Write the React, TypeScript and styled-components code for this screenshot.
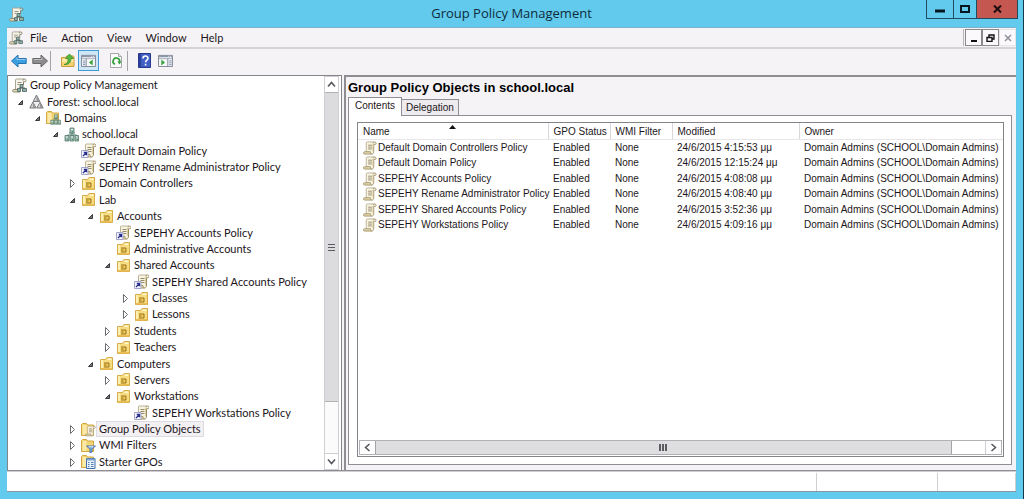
import React from "react";
import styled, { createGlobalStyle, css } from "styled-components";

const TITLE_FONT = '"Open Sans", "Noto Sans", sans-serif';
const UI_FONT = 'Lato, "Open Sans", sans-serif';
const CLASSIC_FONT = '"Liberation Sans", Arial, sans-serif';

const GlobalStyle = createGlobalStyle`
  *, *::before, *::after { box-sizing: border-box; }
  html, body { margin: 0; height: 100%; }
  body { background: #62caed; color: #1c1620; font: 11px/16px ${UI_FONT}; }
  #root { height: 100%; }
  button { font: inherit; color: inherit; padding: 0; margin: 0; border: 0; background: none; }
  svg { display: block; flex: none; }
`;

/* ---------- window frame ---------- */

const Window = styled.div`
  display: flex;
  flex-direction: column;
  min-height: 100%;
  padding: 0 7px 7px;
  background: #62caed;
  border-right: 1px solid #16394a;
`;

const TitleBar = styled.header`
  display: grid;
  grid-template-columns: 1fr auto 1fr;
  height: 27px;
`;

const TitleIcon = styled.span`
  padding: 7px 0 0 2px;
`;

const Title = styled.h1`
  margin: 0;
  font-family: ${TITLE_FONT};
  font-size: 13px;
  font-weight: 400;
  line-height: 27px;
  color: #0d2c3b;
`;

const Caption = styled.div`
  display: flex;
  justify-self: end;
  height: 19px;
  border: 1px solid #1f4c60;
  border-top: 0;
  margin-right: -2px;
`;

const CaptionButton = styled.button<{ $width: number; $close?: boolean }>`
  display: grid;
  place-items: center;
  width: ${(p) => p.$width}px;
  height: 18px;
  background: ${(p) => (p.$close ? "#c45850" : "transparent")};
  & + & { border-left: 1px solid #1f4c60; }
`;

const Client = styled.main`
  flex: 1;
  display: flex;
  flex-direction: column;
  background: #f6f3f7;
  border-top: 1px solid #7db3ca;
  border-bottom: 1px solid #8797a3;
`;

/* ---------- menu and toolbar ---------- */

const MenuBar = styled.nav`
  display: flex;
  align-items: center;
  height: 21px;
  padding-left: 2px;
  border-bottom: 2px solid #d6d2d6;
`;

const MenuItem = styled.button`
  padding: 0 7px;
`;

const ChildButtons = styled.div`
  display: flex;
  margin-left: auto;
  padding-left: 1px;
  border-left: 1px solid #b9b5b9;
`;

const ChildButton = styled.button<{ $muted?: boolean }>`
  display: grid;
  place-items: center;
  width: 17px;
  height: 17px;
  border: 1px solid ${(p) => (p.$muted ? "#e8e5e9" : "#8c898e")};
  background: #fbf9fc;
`;

const ToolBar = styled.div`
  display: flex;
  align-items: center;
  height: 26px;
  padding: 0 0 3px 1px;
`;

const ToolButton = styled.button<{ $pressed?: boolean }>`
  display: grid;
  place-items: center;
  width: 21px;
  height: 21px;
  ${(p) =>
    p.$pressed &&
    css`
      background: #cfe6f7;
      border: 1px solid #3e9bd6;
    `}
`;

const ToolGap = styled.span<{ $line?: boolean }>`
  width: 7px;
  height: 20px;
  ${(p) => p.$line && "border-left: 1px solid #a5a2a8;"}
`;

/* ---------- panes ---------- */

const Panes = styled.div`
  flex: 1;
  display: flex;
  gap: 2px;
  border-bottom: 1px solid #8f8d92;
`;

const TreePane = styled.section`
  flex: 0 0 335px;
  display: flex;
  background: #fff;
  border: 1px solid #85838a;
  border-bottom: 0;
`;

const Tree = styled.ul`
  flex: 1;
  min-width: 0;
  display: flex;
  flex-direction: column;
  margin: 0;
  padding: 1px 0 0;
  list-style: none;
`;

const TreeRow = styled.li<{ $indent: number }>`
  flex: 1 0 16px;
  display: flex;
  align-items: center;
  padding-left: ${(p) => p.$indent}px;
`;

const Expander = styled.button`
  display: grid;
  place-items: center;
  width: 16px;
  height: 16px;
`;

const TreeLabel = styled.span<{ $selected?: boolean }>`
  padding: 0 3px;
  white-space: nowrap;
  line-height: 16px;
  ${(p) => p.$selected && "background: #f3f0f4; outline: 1px solid #dedbe0; outline-offset: -1px;"}
`;

const VScroll = styled.div`
  display: flex;
  flex-direction: column;
  width: 15px;
  margin-right: 2px;
  border: 1px solid #d0ced2;
  background: #fcfbfc;
`;

const VThumb = styled.div`
  flex: 0 0 79%;
  display: grid;
  place-items: center;
  background: #dcdbdd;
  border: solid #b3b1b5;
  border-width: 1px 0;
`;

const VTrack = styled.div`
  flex: 1;
  border-bottom: 1px solid #d0ced2;
`;

const ScrollButton = styled.button`
  display: grid;
  place-items: center;
  flex: 0 0 15px;
  background: #fff;
`;

const DetailPane = styled.section`
  flex: 1;
  min-width: 0;
  display: flex;
  flex-direction: column;
  padding: 2px 4px 5px 2px;
  border-top: 2px solid #8f8d92;
  border-left: 2px solid #8f8d92;
  font-family: ${CLASSIC_FONT};
  font-size: 10px;
`;

const Heading = styled.h2`
  margin: 0;
  font-size: 13px;
  line-height: 18px;
  color: #000;
`;

const Tabs = styled.div`
  display: flex;
  align-items: flex-end;
`;

const Tab = styled.button<{ $active?: boolean }>`
  position: relative;
  height: ${(p) => (p.$active ? 19 : 16)}px;
  padding: ${(p) => (p.$active ? "0 6px 2px" : "0 4px")};
  margin-bottom: ${(p) => (p.$active ? -1 : 0)}px;
  border: 1px solid #908e94;
  border-bottom: 0;
  line-height: 14px;
  background: ${(p) => (p.$active ? "#fff" : "#eeebef")};
  & + & { border-left: 0; }
`;

const TabPanel = styled.div`
  flex: 1;
  display: flex;
  padding: 6px 7px 7px 8px;
  background: #fff;
  border: 1px solid #908e94;
`;

const ListBox = styled.div`
  flex: 1;
  min-width: 0;
  display: flex;
  flex-direction: column;
  border: 1px solid #85838a;
`;

const ListArea = styled.div`
  flex: 1;
  overflow: hidden;
`;

const PolicyTable = styled.table`
  width: 100%;
  height: 110px;
  border-collapse: collapse;
  table-layout: fixed;
  line-height: 14px;
  white-space: nowrap;
`;

const Column = styled.col<{ $width?: number }>`
  width: ${(p) => (p.$width ? `${p.$width}px` : "auto")};
`;

const HeaderCell = styled.th`
  position: relative;
  height: 16px;
  padding: 2px 0 0 5px;
  font-weight: 400;
  text-align: left;
  border-bottom: 1px solid #e8e6e9;
  & + & { border-left: 1px solid #d9d7da; }
`;

const SortMark = styled.span`
  position: absolute;
  top: 2px;
  left: calc(50% - 4px);
`;

const Cell = styled.td`
  padding: 0 0 0 5px;
`;

const NameCell = styled.span`
  display: flex;
  align-items: center;
  gap: 1px;
`;

const HScroll = styled.div`
  display: flex;
  height: 15px;
  margin: 0 1px 1px;
  border: 1px solid #b3b1b5;
  background: #fff;
`;

const HThumb = styled.div`
  flex: 0 0 90%;
  display: grid;
  place-items: center;
  background: #dedddf;
  border: solid #a5a3a8;
  border-width: 0 1px;
`;

const HTrack = styled.div`
  flex: 1;
  border-right: 1px solid #d0ced2;
`;

const StatusBar = styled.footer`
  display: flex;
  height: 20px;
  background: #fff;
  border-top: 1px solid #d0ced2;
`;

const StatusCell = styled.span<{ $width?: number }>`
  flex: ${(p) => (p.$width ? `0 0 ${p.$width}px` : "1")};
  margin-top: 1px;
  border-right: 1px solid #d0ced2;
`;

/* ---------- icons ---------- */

type IconName =
  | "console" | "forest" | "domains" | "domain" | "link" | "ou" | "gpos" | "wmi" | "starter" | "scroll";

const Scroll = () => (
  <>
    <path d="M3.500 1h9v2.500h-1V12l-1.500 2H3.500z" fill="#f8f4e2" />
    <path d="M3.500 11V2c0-.6.400-1 1-1H12" fill="none" stroke="#bdb294" />
    <path d="M11 2.500c0-2 3-2 3 0 0 .8-.6 1.200-1.200 1.200h-1.300V11c0 1.800-.8 3-2 3" fill="none" stroke="#9c8c60" />
    <path d="M10.500 3v8" stroke="#dccf9f" />
    <path d="M9.500 14H1.800c-1.700 0-1.700-2.500 0-2.500H8c0 1.500.5 2.500 1.500 2.500z" fill="#e4d9b2" stroke="#a39468" />
    <path d="M5.500 4.500h4M5.500 6.500h4M5.500 8.500h4" stroke="#95896a" />
  </>
);

const Folder = () => (
  <>
    <path d="M.5 13.500v-11l1-1h4l1 1.500h6v10.500z" fill="#f3d473" stroke="#d2a63f" />
    <path d="M1.500 3h4v10h-4z" fill="#fbe9a8" />
  </>
);

const Servers = () => (
  <>
    <path d="M5 6h6M8 5v3M3.500 12V8h9v4" fill="none" stroke="#517a70" />
    <path d="M6 1h4v5H6zM1 8.500h4V14H1zM6 8.500h4V14H6zM11 8.500h3.500V14H11z" fill="#9ab8ad" stroke="#56786f" strokeWidth=".8" />
    <path d="M7 2.500h2M2 10h2M7 10h2M12 10h1.500" stroke="#e6f4e9" />
    <path d="M3 12.500h1M8 12.500h1M13 12.500h1M8 4.500h1" stroke="#3e9a50" />
  </>
);

function Icon({ name, size = 15 }: { name: IconName; size?: number }) {
  return (
    <svg width={size} height={size} viewBox="0 0 15 15" aria-hidden="true">
      {name === "scroll" && <Scroll />}
      {name === "console" && (
        <>
          <path d="M3.500 1h9v2.500h-1V12l-1.500 2H3.500z" fill="#f6f4ea" />
          <path d="M3.500 11V2c0-.6.400-1 1-1H12" fill="none" stroke="#a9a594" />
          <path d="M11 2.500c0-2 3-2 3 0 0 .8-.6 1.200-1.200 1.200h-1.300V7" fill="none" stroke="#85826f" />
          <path d="M8 14H1.800c-1.700 0-1.700-2.500 0-2.500H6z" fill="#e6dfc2" stroke="#8f8868" />
          <path d="M5.500 4.500h4M5.500 6.500h2" stroke="#9a937a" />
          <path d="M8 6.500h3v3H8zM5.500 10.500h3v3h-3zM10.500 10.500h4v3h-4z" fill="#8fb0a6" stroke="#4d635f" strokeWidth=".8" />
          <path d="M7 10h6" stroke="#4d635f" />
        </>
      )}
      {name === "forest" && (
        <>
          <path d="M7.500 1l3.300 6.500H4.200zM4 8l3.200 6H.8zM11 8l3.200 6H7.800z" fill="#d5d5d6" stroke="#77777a" />
          <path d="M7.500 1v6.500h3.300zM4 8v6h3.200zM11 8v6h3.200z" fill="#98989b" />
          <path d="M4.500 8h6l-3 5z" fill="#f0f0f1" />
        </>
      )}
      {name === "domains" && (
        <>
          <Folder />
          <g transform="translate(4 4) scale(.74)"><Servers /></g>
        </>
      )}
      {name === "domain" && <Servers />}
      {name === "link" && (
        <>
          <g transform="translate(1 0)"><Scroll /></g>
          <path d="M.5 7.500h6.500v7H.5z" fill="#f4f4fb" stroke="#a3a5c8" />
          <path d="M2 13l3-3M2.800 9.500h2.700v2.700" fill="none" stroke="#262f8c" strokeWidth="1.300" />
        </>
      )}
      {name === "ou" && (
        <>
          <path d="M1.500 13.500v-10h5l1.500-2h5.500v12z" fill="#f7dc80" stroke="#d6ab4a" />
          <path d="M8.500 2.500h4v1.500h-4z" fill="#fff6cf" />
          <path d="M2 4h2v9H2z" fill="#fdf0b5" />
          <path d="M2 12h11v1.500H2z" fill="#eabf55" />
          <path d="M5 7h5v4H5" fill="#f3cc58" stroke="#96701f" />
          <path d="M5 9h2.500" stroke="#96701f" />
        </>
      )}
      {name === "gpos" && (
        <>
          <Folder />
          <g transform="translate(4 3.500) scale(.74)"><Scroll /></g>
        </>
      )}
      {name === "wmi" && (
        <>
          <Folder />
          <path d="M5.500 8h9l-3.500 3v3l-2 1v-4z" fill="#7fa9dc" stroke="#3a69a8" strokeWidth=".8" />
          <path d="M7.500 8.800h5" stroke="#dcebfa" />
        </>
      )}
      {name === "starter" && (
        <>
          <Folder />
          <path d="M5.500 4.500h8.500v10h-8.500z" fill="#eaf1fa" stroke="#3f6fae" />
          <path d="M5.500 5.500H14" stroke="#7ba3d4" strokeWidth="2" />
          <path d="M7 8.500h1.500M10 8.500h2.500M7 10.500h1.500M10 10.500h2.500M7 12.500h1.500M10 12.500h2.500" stroke="#4f7fb8" />
        </>
      )}
    </svg>
  );
}

const Chevron = ({ d }: { d: string }) => (
  <svg width="9" height="9" viewBox="0 0 9 9" aria-hidden="true">
    <path d={d} fill="none" stroke="#55535a" strokeWidth="1.500" />
  </svg>
);

const ArrowIcon = ({ fill, stroke, flip }: { fill: string; stroke: string; flip?: boolean }) => (
  <svg width="16" height="14" viewBox="0 0 16 14" aria-hidden="true">
    <path
      d={flip ? "M15.500 7L9 1v3.500H.8v5H9V13z" : "M.5 7L7 1v3.500h8.200v5H7V13z"}
      fill={fill}
      stroke={stroke}
    />
    <path d={flip ? "M1.500 5.500h8.500V3.500" : "M6 3.500v2h8.500"} fill="none" stroke="#fff" strokeOpacity=".45" />
  </svg>
);

const PaneIcon = ({ right }: { right?: boolean }) => (
  <svg width="15" height="13" viewBox="0 0 16 14" aria-hidden="true">
    <path d="M.5 1.500h15v12H.5z" fill="#f7f8fa" stroke="#7b828e" />
    <path d="M1 2.500h14" stroke="#8d97aa" strokeWidth="2" />
    <path d="M11 2.500h1M13 2.500h1" stroke="#f4f6fa" />
    <path d="M1 5h14" stroke="#a4adbc" />
    <path d={right ? "M10.500 5v8" : "M5.500 5v8"} stroke="#7b828e" />
    <path
      d={right ? "M12 7.500h2.500M12 9.500h2.500M12 11.500h2.500" : "M2 7.500h2.500M2 9.500h2.500M2 11.500h2.500"}
      stroke="#6d87ac"
    />
    <path d={right ? "M3.500 6v6.500l4-3.250z" : "M12.500 6v6.500l-4-3.250z"} fill="#39a33b" />
  </svg>
);

/* ---------- data ---------- */

type Node = { label: string; level: number; icon: IconName; state?: "open" | "closed"; selected?: boolean };

const INDENTS = [4, 5, 22, 40, 57, 75, 92, 110];

const NODES: Node[] = [
  { label: "Group Policy Management", level: 0, icon: "console" },
  { label: "Forest: school.local", level: 1, icon: "forest", state: "open" },
  { label: "Domains", level: 2, icon: "domains", state: "open" },
  { label: "school.local", level: 3, icon: "domain", state: "open" },
  { label: "Default Domain Policy", level: 4, icon: "link" },
  { label: "SEPEHY Rename Administrator Policy", level: 4, icon: "link" },
  { label: "Domain Controllers", level: 4, icon: "ou", state: "closed" },
  { label: "Lab", level: 4, icon: "ou", state: "open" },
  { label: "Accounts", level: 5, icon: "ou", state: "open" },
  { label: "SEPEHY Accounts Policy", level: 6, icon: "link" },
  { label: "Administrative Accounts", level: 6, icon: "ou" },
  { label: "Shared Accounts", level: 6, icon: "ou", state: "open" },
  { label: "SEPEHY Shared Accounts Policy", level: 7, icon: "link" },
  { label: "Classes", level: 7, icon: "ou", state: "closed" },
  { label: "Lessons", level: 7, icon: "ou", state: "closed" },
  { label: "Students", level: 6, icon: "ou", state: "closed" },
  { label: "Teachers", level: 6, icon: "ou", state: "closed" },
  { label: "Computers", level: 5, icon: "ou", state: "open" },
  { label: "Servers", level: 6, icon: "ou", state: "closed" },
  { label: "Workstations", level: 6, icon: "ou", state: "open" },
  { label: "SEPEHY Workstations Policy", level: 7, icon: "link" },
  { label: "Group Policy Objects", level: 4, icon: "gpos", state: "closed", selected: true },
  { label: "WMI Filters", level: 4, icon: "wmi", state: "closed" },
  { label: "Starter GPOs", level: 4, icon: "starter", state: "closed" },
];

const POLICIES = [
  ["Default Domain Controllers Policy", "24/6/2015 4:15:53 μμ"],
  ["Default Domain Policy", "24/6/2015 12:15:24 μμ"],
  ["SEPEHY Accounts Policy", "24/6/2015 4:08:08 μμ"],
  ["SEPEHY Rename Administrator Policy", "24/6/2015 4:08:40 μμ"],
  ["SEPEHY Shared Accounts Policy", "24/6/2015 3:52:36 μμ"],
  ["SEPEHY Workstations Policy", "24/6/2015 4:09:16 μμ"],
];

function TreeNode({ node }: { node: Node }) {
  return (
    <TreeRow
      role="treeitem"
      aria-level={node.level + 1}
      aria-expanded={node.state ? node.state === "open" : undefined}
      aria-selected={!!node.selected}
      $indent={INDENTS[node.level]}
    >
      {node.level > 0 && (
        <Expander as={node.state ? "button" : "span"} aria-label={node.state ? `Toggle ${node.label}` : undefined}>
          {node.state && (
            <svg width="8" height="10" viewBox="0 0 8 10" aria-hidden="true">
              {node.state === "open" ? (
                <path d="M5.500 3.500v4h-4z" fill="#77757c" stroke="#3a383d" />
              ) : (
                <path d="M1.500 1.500v8l4-4z" fill="#fff" stroke="#6d6b72" />
              )}
            </svg>
          )}
        </Expander>
      )}
      <Icon name={node.icon} />
      <TreeLabel $selected={node.selected}>{node.label}</TreeLabel>
    </TreeRow>
  );
}

export default function App() {
  return (
    <>
      <GlobalStyle />
      <Window>
        <TitleBar>
          <TitleIcon><Icon name="console" /></TitleIcon>
          <Title>Group Policy Management</Title>
          <Caption>
            <CaptionButton $width={26} aria-label="Minimize">
              <svg width="10" height="8" viewBox="0 0 10 8"><path d="M0 6h10" stroke="#06161e" strokeWidth="3" /></svg>
            </CaptionButton>
            <CaptionButton $width={23} aria-label="Maximize">
              <svg width="10" height="8" viewBox="0 0 10 8"><path d="M1 1h8v6H1z" fill="none" stroke="#06161e" strokeWidth="2" /></svg>
            </CaptionButton>
            <CaptionButton $width={41} $close aria-label="Close">
              <svg width="9" height="8" viewBox="0 0 9 8"><path d="M1 .5l7 7M8 .5l-7 7" stroke="#1c0c0e" strokeWidth="2" /></svg>
            </CaptionButton>
          </Caption>
        </TitleBar>
        <Client>
          <MenuBar aria-label="Main menu">
            <Icon name="console" size={14} />
            {["File", "Action", "View", "Window", "Help"].map((m) => <MenuItem key={m}>{m}</MenuItem>)}
            <ChildButtons>
              <ChildButton aria-label="Minimize child window">
                <svg width="8" height="8" viewBox="0 0 8 8"><path d="M1 7h6" stroke="#111" strokeWidth="2" /></svg>
              </ChildButton>
              <ChildButton aria-label="Restore child window">
                <svg width="9" height="8" viewBox="0 0 9 8"><path d="M3 3V1h5v4H6M1 3.500h5v4H1z" fill="none" stroke="#111" strokeWidth="1.400" /></svg>
              </ChildButton>
              <ChildButton $muted aria-label="Close child window">
                <svg width="8" height="8" viewBox="0 0 8 8"><path d="M1 1l6 6M7 1L1 7" stroke="#8f9298" strokeWidth="1.500" /></svg>
              </ChildButton>
            </ChildButtons>
          </MenuBar>
          <ToolBar role="toolbar" aria-label="Tools">
            <ToolButton aria-label="Back"><ArrowIcon fill="#3ba0e2" stroke="#2672ae" /></ToolButton>
            <ToolButton aria-label="Forward"><ArrowIcon fill="#8d8c8f" stroke="#67666a" flip /></ToolButton>
            <ToolGap $line />
            <ToolButton aria-label="Up one level">
              <svg width="15" height="15" viewBox="0 0 15 15">
                <path d="M1.500 13.500v-9h4l1-1.500h7l.5 1v9.500z" fill="#f4d274" stroke="#c99c3c" />
                <path d="M2 6h11.500v3H2z" fill="#fbe8a5" />
                <path d="M4 11.500c3.500-.5 4-3 4-6H5.500L9.500 1l4 4.500h-2.500c0 4-2.500 6.500-7 6z" fill="#56b83f" stroke="#2d8a26" strokeWidth=".7" />
              </svg>
            </ToolButton>
            <ToolButton $pressed aria-label="Show or hide console tree" aria-pressed="true"><PaneIcon /></ToolButton>
            <ToolGap />
            <ToolButton aria-label="Refresh">
              <svg width="15" height="15" viewBox="0 0 15 15">
                <path d="M1.500.5h8l3 3v11h-11z" fill="#fbfcfb" stroke="#a5a9a6" />
                <path d="M9.500.5v3h3" fill="#e4e6e4" stroke="#a5a9a6" />
                <path d="M6 11.300a3.300 3.300 0 1 1 4.500-2" fill="none" stroke="#35a03d" strokeWidth="1.700" />
                <path d="M8.300 8.500h4.200l-2 3z" fill="#35a03d" />
              </svg>
            </ToolButton>
            <ToolGap $line />
            <ToolButton aria-label="Help">
              <svg width="13" height="15" viewBox="0 0 13 15">
                <path d="M.5.5h12v14H.5z" fill="#3f5fc4" stroke="#27398f" />
                <path d="M1 1h2v13H1z" fill="#2c3f9c" />
                <path d="M5 5.500C5 2.300 10 2.300 10 5.300c0 2-2.400 1.900-2.400 4M7.600 10.800v1.600" fill="none" stroke="#fff" strokeWidth="1.600" />
              </svg>
            </ToolButton>
            <ToolButton aria-label="Show or hide action pane"><PaneIcon right /></ToolButton>
          </ToolBar>
          <Panes>
            <TreePane>
              <Tree role="tree" aria-label="Console tree">
                {NODES.map((n) => <TreeNode key={n.label} node={n} />)}
              </Tree>
              <VScroll>
                <ScrollButton aria-label="Scroll up"><Chevron d="M1 6.500l3.500-4 3.500 4" /></ScrollButton>
                <VThumb>
                  <svg width="7" height="8" viewBox="0 0 7 8"><path d="M0 1.500h7M0 4.500h7M0 7.500h7" stroke="#5d5b61" /></svg>
                </VThumb>
                <VTrack />
                <ScrollButton aria-label="Scroll down"><Chevron d="M1 2.500l3.500 4 3.500-4" /></ScrollButton>
              </VScroll>
            </TreePane>
            <DetailPane>
              <Heading>Group Policy Objects in school.local</Heading>
              <Tabs role="tablist">
                <Tab role="tab" aria-selected="true" $active>Contents</Tab>
                <Tab role="tab" aria-selected="false">Delegation</Tab>
              </Tabs>
              <TabPanel role="tabpanel">
                <ListBox>
                  <ListArea>
                    <PolicyTable>
                      <colgroup>
                        <Column $width={190} />
                        <Column $width={62} />
                        <Column $width={62} />
                        <Column $width={127} />
                        <Column />
                      </colgroup>
                      <thead>
                        <tr>
                          <HeaderCell>
                            Name
                            <SortMark>
                              <svg width="7" height="4" viewBox="0 0 7 4"><path d="M0 4l3.500-4L7 4z" fill="#111" /></svg>
                            </SortMark>
                          </HeaderCell>
                          <HeaderCell>GPO Status</HeaderCell>
                          <HeaderCell>WMI Filter</HeaderCell>
                          <HeaderCell>Modified</HeaderCell>
                          <HeaderCell>Owner</HeaderCell>
                        </tr>
                      </thead>
                      <tbody>
                        {POLICIES.map(([name, modified]) => (
                          <tr key={name}>
                            <Cell><NameCell><Icon name="scroll" size={14} />{name}</NameCell></Cell>
                            <Cell>Enabled</Cell>
                            <Cell>None</Cell>
                            <Cell>{modified}</Cell>
                            <Cell>Domain Admins (SCHOOL\Domain Admins)</Cell>
                          </tr>
                        ))}
                      </tbody>
                    </PolicyTable>
                  </ListArea>
                  <HScroll>
                    <ScrollButton aria-label="Scroll left"><Chevron d="M6.500 1l-4 3.500 4 3.500" /></ScrollButton>
                    <HThumb>
                      <svg width="8" height="7" viewBox="0 0 8 7"><path d="M1 0v7M4 0v7M7 0v7" stroke="#5d5b61" strokeWidth="2" /></svg>
                    </HThumb>
                    <HTrack />
                    <ScrollButton aria-label="Scroll right"><Chevron d="M2.500 1l4 3.500-4 3.500" /></ScrollButton>
                  </HScroll>
                </ListBox>
              </TabPanel>
            </DetailPane>
          </Panes>
          <StatusBar>
            <StatusCell />
            <StatusCell $width={121} />
            <StatusCell $width={78} />
          </StatusBar>
        </Client>
      </Window>
    </>
  );
}
